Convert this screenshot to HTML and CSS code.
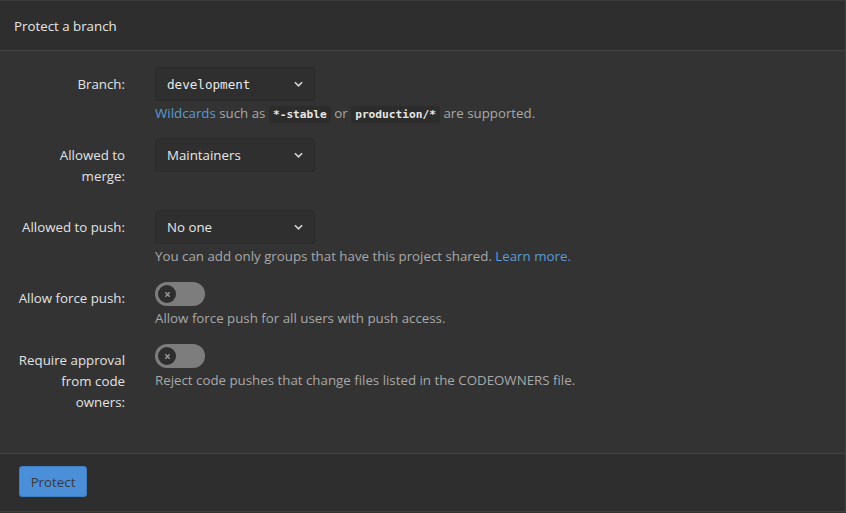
FILE: index.html
```html
<!DOCTYPE html>
<html>
<head>
<meta charset="utf-8">
<link rel="stylesheet" href="styles.css">
</head>
<body>
<div class="card">
  <div class="card-header">Protect a branch</div>
  <div class="card-body">
    <div class="row">
      <div class="label">Branch:</div>
      <div class="field">
        <div class="select mono"><span>development</span><svg class="chev" viewBox="0 0 10 6" width="9" height="6"><path d="M1 1l4 4 4-4" fill="none" stroke="#d6d6d6" stroke-width="1.8"/></svg></div>
        <div class="help"><a class="link">Wildcards</a> such as <code>*-stable</code> or <code>production/*</code> are supported.</div>
      </div>
    </div>
    <div class="row">
      <div class="label">Allowed to merge:</div>
      <div class="field">
        <div class="select"><span>Maintainers</span><svg class="chev" viewBox="0 0 10 6" width="9" height="6"><path d="M1 1l4 4 4-4" fill="none" stroke="#d6d6d6" stroke-width="1.8"/></svg></div>
      </div>
    </div>
    <div class="row">
      <div class="label">Allowed to push:</div>
      <div class="field">
        <div class="select"><span>No one</span><svg class="chev" viewBox="0 0 10 6" width="9" height="6"><path d="M1 1l4 4 4-4" fill="none" stroke="#d6d6d6" stroke-width="1.8"/></svg></div>
        <div class="help">You can add only groups that have this project shared. <a class="link">Learn more.</a></div>
      </div>
    </div>
    <div class="row">
      <div class="label">Allow force push:</div>
      <div class="field">
        <div class="toggle"><span class="knob"><svg viewBox="0 0 8 8" width="7" height="7"><path d="M1.5 1.5l5 5M6.5 1.5l-5 5" stroke="#9a9a9a" stroke-width="1.6"/></svg></span></div>
        <div class="help">Allow force push for all users with push access.</div>
      </div>
    </div>
    <div class="row last">
      <div class="label">Require approval from code owners:</div>
      <div class="field">
        <div class="toggle"><span class="knob"><svg viewBox="0 0 8 8" width="7" height="7"><path d="M1.5 1.5l5 5M6.5 1.5l-5 5" stroke="#9a9a9a" stroke-width="1.6"/></svg></span></div>
        <div class="help">Reject code pushes that change files listed in the CODEOWNERS file.</div>
      </div>
    </div>
  </div>
  <div class="card-footer">
    <button class="btn">Protect</button>
  </div>
</div>
</body>
</html>
```
FILE: styles.css
```css
html, body {
  margin: 0;
  padding: 0;
  background: #333333;
}
body {
  font-family: "Open Sans", "Noto Sans", sans-serif;
  font-size: 13.3px;
  color: #e2e2e2;
  width: 846px;
  height: 513px;
  overflow: hidden;
}
.card {
  box-sizing: border-box;
  width: 846px;
  height: 512px;
  border-right: 1px solid #3f3f3f;
  border-bottom: 1px solid #3f3f3f;
  border-top: 1px solid #3a3a3a;
  display: flex;
  flex-direction: column;
  background: #333333;
}
.card-header {
  height: 50px;
  box-sizing: border-box;
  padding: 0 14px;
  display: flex;
  align-items: center;
  background: #2e2e2e;
  border-bottom: 1px solid #444444;
  color: #e6e6e6;
  line-height: 20px;
}
.card-body {
  flex: 1;
  padding-top: 16px;
  border-bottom: 1px solid #444444;
}
.row {
  display: flex;
  margin-bottom: 16px;
}
.row.last { margin-bottom: 0; }
.label {
  box-sizing: border-box;
  width: 125px;
  padding: 7px 0 7px 16px;
  text-align: right;
  line-height: 21px;
  color: #e2e2e2;
  flex-shrink: 0;
}
.field {
  margin-left: 30px;
}
.select {
  box-sizing: border-box;
  width: 160px;
  height: 34px;
  border: 1px solid #2a2a2a;
  border-radius: 3px;
  background: #2f2f2f;
  display: flex;
  align-items: center;
  justify-content: space-between;
  padding: 0 11px 0 11px;
  color: #e8e8e8;
}
.select.mono span {
  font-family: "DejaVu Sans Mono", monospace;
  font-size: 12.6px;
}
.chev { display: block; }
.help {
  margin-top: 3px;
  color: #a8a8a8;
  line-height: 18px;
  height: 18px;
  white-space: nowrap;
}
.link { color: #5a9bd6; }
code {
  font-family: "DejaVu Sans Mono", monospace;
  font-size: 11.2px;
  line-height: 1;
  font-weight: bold;
  color: #e6e6e6;
  background: #2c2c2c;
  padding: 2px 4px;
  border-radius: 3px;
}
.toggle {
  width: 50px;
  height: 24px;
  border-radius: 12px;
  background: #7d7d7d;
  box-sizing: border-box;
  padding: 3px;
  display: flex;
  align-items: center;
  margin-top: 1px;
}
.knob {
  width: 18px;
  height: 18px;
  border-radius: 50%;
  background: #2e2e2e;
  display: flex;
  align-items: center;
  justify-content: center;
}
.knob svg { display: block; }
.card-footer {
  height: 57px;
  background: #2e2e2e;
  padding: 12px 19px 0;
  box-sizing: border-box;
}
.btn {
  width: 68px;
  height: 31px;
  background: #4a8fd8;
  border: 1px solid #3f7fc4;
  border-radius: 3px;
  color: #3a3a3a;
  font-family: "Open Sans", sans-serif;
  font-size: 13.3px;
  padding: 0;
}
```
